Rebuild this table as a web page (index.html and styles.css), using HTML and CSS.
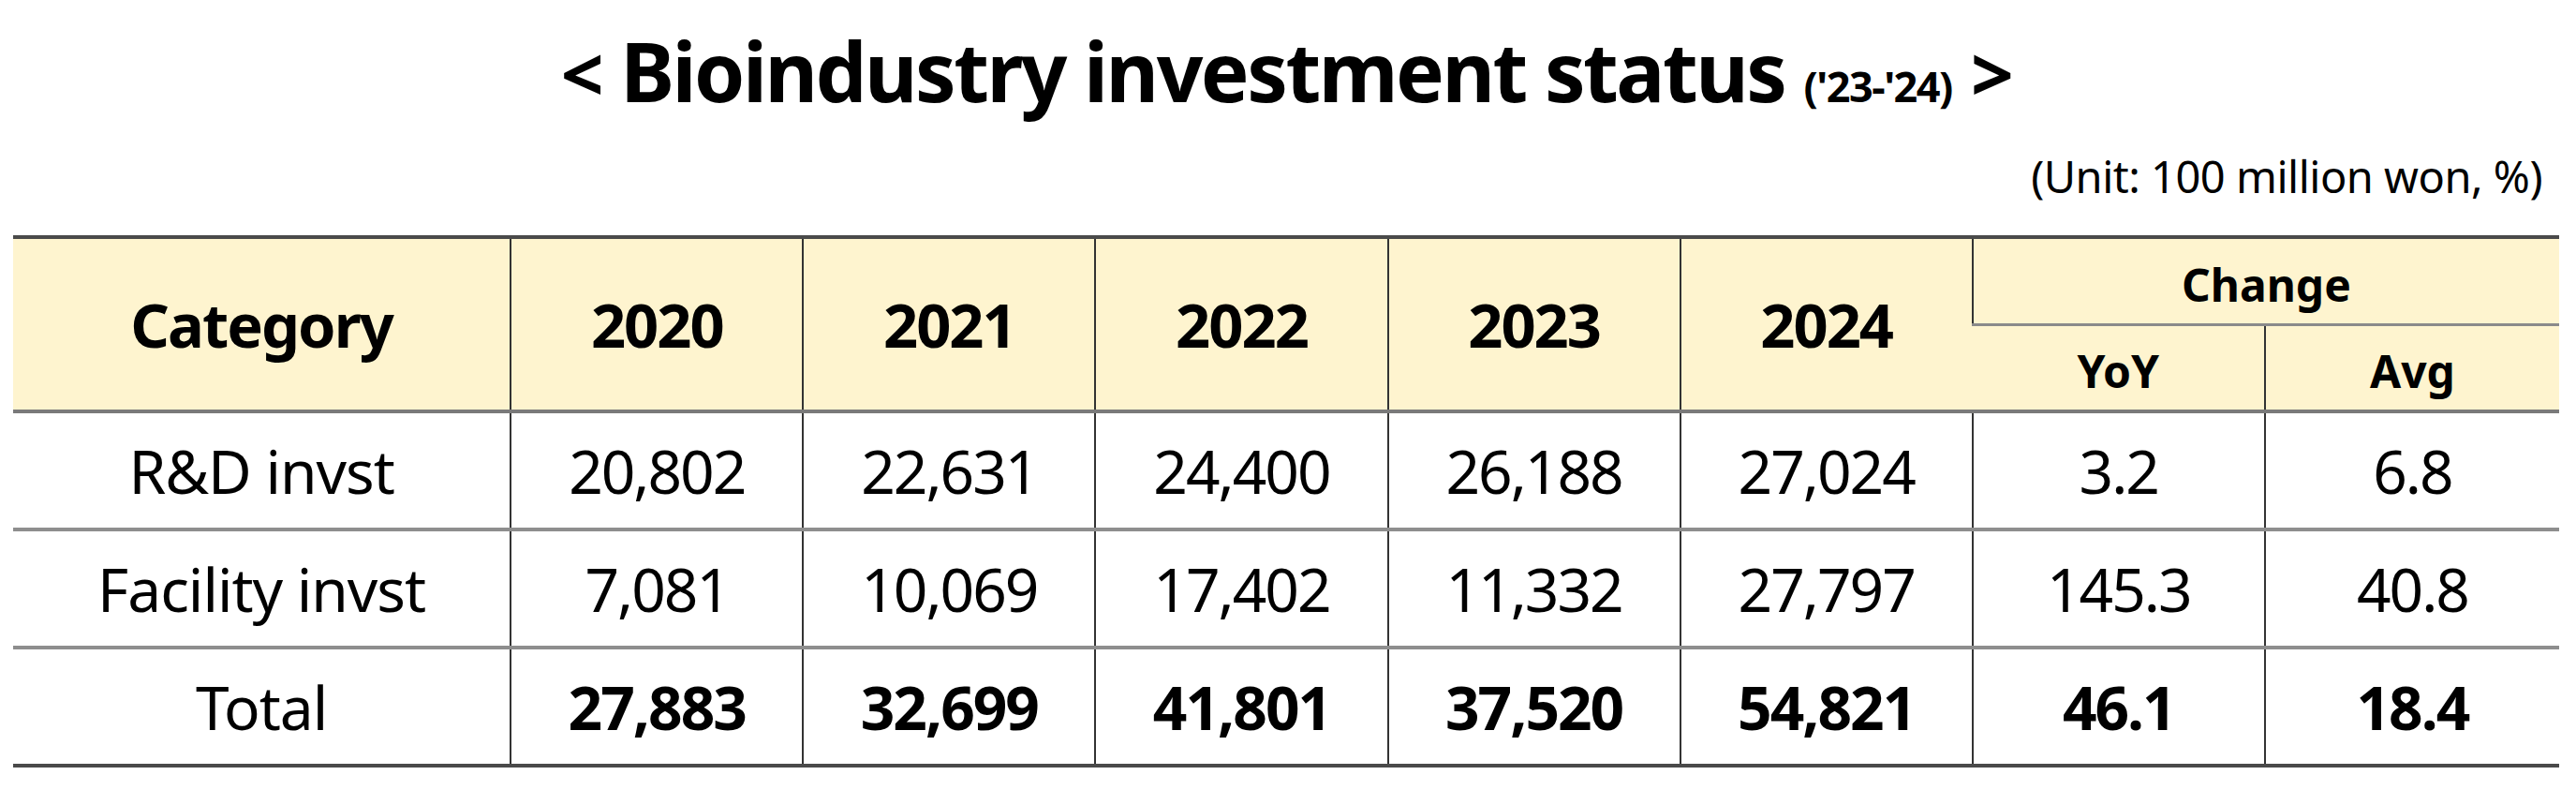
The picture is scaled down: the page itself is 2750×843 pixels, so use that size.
FILE: index.html
```html
<!DOCTYPE html>
<html lang="en">
<head>
<meta charset="utf-8">
<title>Bioindustry investment status</title>
<link rel="stylesheet" href="styles.css">
</head>
<body>
<div class="page">
  <h1 class="title"><span class="br">&lt;</span> Bioindustry investment status <span class="period">('23-'24)</span> <span class="br">&gt;</span></h1>
  <p class="unit">(Unit: 100 million won, %)</p>
  <table class="data">
    <colgroup>
      <col class="c-cat">
      <col class="c-yr"><col class="c-yr"><col class="c-yr"><col class="c-yr"><col class="c-yr">
      <col class="c-yr"><col class="c-last">
    </colgroup>
    <thead>
      <tr class="h1">
        <th rowspan="2" class="big">Category</th>
        <th rowspan="2" class="big">2020</th>
        <th rowspan="2" class="big">2021</th>
        <th rowspan="2" class="big">2022</th>
        <th rowspan="2" class="big">2023</th>
        <th rowspan="2" class="big">2024</th>
        <th colspan="2" class="small group">Change</th>
      </tr>
      <tr class="h2">
        <th class="small">YoY</th>
        <th class="small">Avg</th>
      </tr>
    </thead>
    <tbody>
      <tr>
        <td class="cat">R&amp;D invst</td>
        <td>20,802</td><td>22,631</td><td>24,400</td><td>26,188</td><td>27,024</td><td>3.2</td><td>6.8</td>
      </tr>
      <tr>
        <td class="cat">Facility invst</td>
        <td>7,081</td><td>10,069</td><td>17,402</td><td>11,332</td><td>27,797</td><td>145.3</td><td>40.8</td>
      </tr>
      <tr class="total">
        <td class="cat">Total</td>
        <td>27,883</td><td>32,699</td><td>41,801</td><td>37,520</td><td>54,821</td><td>46.1</td><td>18.4</td>
      </tr>
    </tbody>
  </table>
</div>
</body>
</html>
```

FILE: styles.css
```css
html, body {
  margin: 0;
  padding: 0;
  background: #ffffff;
}

body {
  font-family: "Noto Sans", "Noto Sans CJK KR", sans-serif;
  color: #000;
}

.page {
  padding: 0 18px 0 14px;
  display: flex;
  flex-direction: column;
}

.title {
  margin: 0;
  padding-top: 16px;
  text-align: center;
  font-size: 87px;
  font-weight: 700;
  line-height: 119px;
  height: 119px;
  letter-spacing: -2.5px;
  white-space: nowrap;
}

.title .br {
  font-weight: 700;
  font-size: 80px;
}

.title .period {
  font-size: 45px;
  letter-spacing: -1.5px;
}

.unit {
  margin: 25px 0 0 0;
  padding-right: 18px;
  text-align: right;
  font-size: 47px;
  line-height: 57px;
  height: 57px;
  letter-spacing: -0.5px;
}

.data {
  margin-top: 34px;
  width: 2718px;
  border-collapse: collapse;
  table-layout: fixed;
}

.c-cat { width: 531px; }
.c-yr { width: 312px; }
.c-last { width: 314px; }

.data th,
.data td {
  padding: 0;
  text-align: center;
  vertical-align: middle;
  border-left: 2px solid #333333;
  font-size: 64px;
  letter-spacing: -2px;
}

.data th:first-child,
.data td:first-child {
  border-left: none;
}

.data thead th {
  background: #fef4cf;
  font-weight: 700;
}

.data thead tr.h1 th {
  border-top: 4px solid #4a4a4a;
  height: 90px;
}

.data thead tr.h1 th.group {
  height: 84px;
  padding-top: 6px;
  border-bottom: 3px solid #8a8a8a;
}

.data thead tr.h2 th {
  height: 83px;
  padding-top: 6px;
  border-bottom: 4px solid #7a7a7a;
}

.data thead th.big {
  border-bottom: 4px solid #7a7a7a;
  font-size: 65px;
}

.data thead th.small {
  font-size: 48px;
  letter-spacing: 0;
}

.data tbody td {
  height: 122px;
  font-weight: 400;
  border-bottom: 4px solid #8e8e8e;
}

.data tbody td.cat {
  letter-spacing: -1px;
}

.data tbody tr.total td {
  font-weight: 700;
  border-bottom: 4px solid #4a4a4a;
}

.data tbody tr.total td.cat {
  font-weight: 400;
}
```
